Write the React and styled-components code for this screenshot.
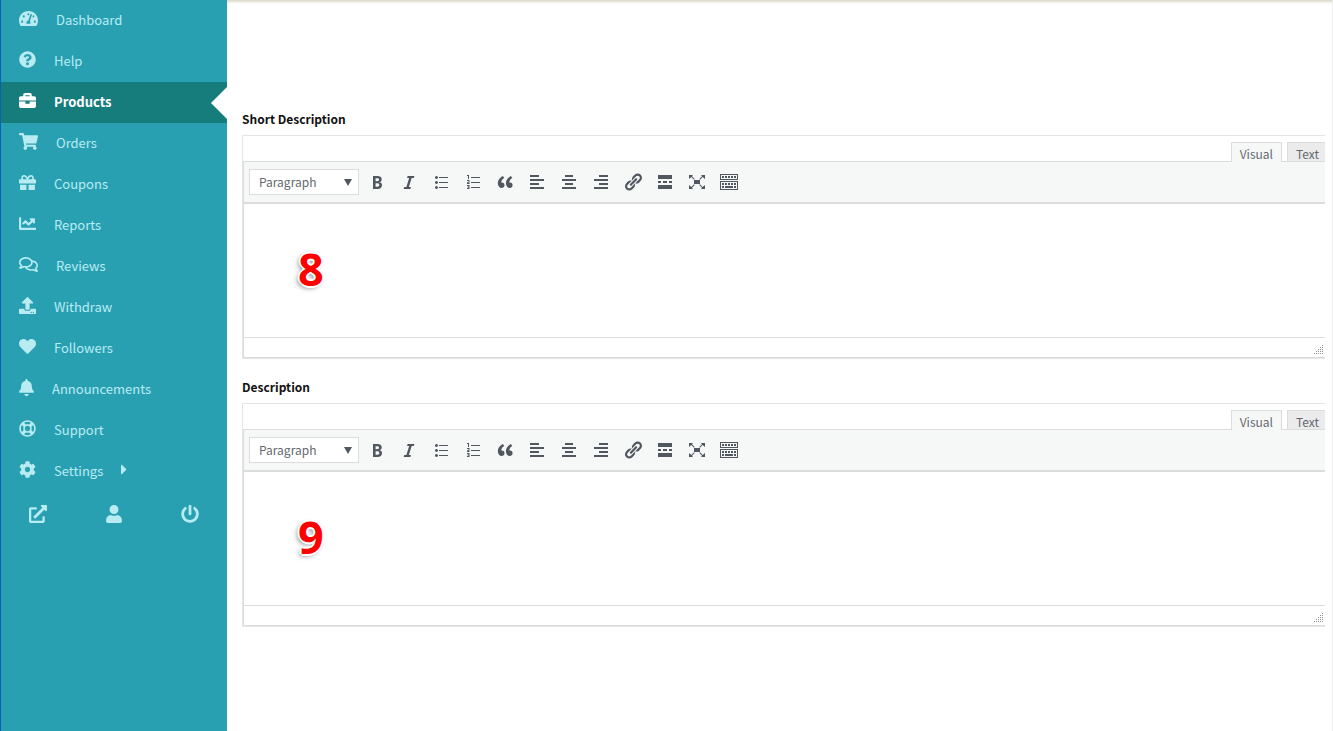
import React from 'react';
import styled, { createGlobalStyle } from 'styled-components';
import {
    FaTachometerAlt, FaQuestionCircle, FaBriefcase, FaShoppingCart, FaGift, FaChartLine,
    FaRegComments, FaUpload, FaHeart, FaBell, FaRegLifeRing, FaCog, FaCaretRight,
    FaExternalLinkAlt, FaUser, FaPowerOff
} from 'react-icons/fa';

const GlobalStyle = createGlobalStyle`
    * {
        box-sizing: border-box;
    }
    body {
        margin: 0;
        background: #fff;
        font-family: "Noto Sans CJK SC", "Open Sans", sans-serif;
        font-size: 13px;
        color: #111;
    }
`
const Page = styled.div`
    display: flex;
    min-height: 100vh;
    border-left: 1px solid #0a62b4;
    border-right: 1px solid #eee;
`
const Sidebar = styled.nav`
    width: 226px;
    flex: none;
    background: #29a0b2;
`
const Menu = styled.ul`
    list-style: none;
    margin: 0;
    padding: 0;
`
const MenuLink = styled.a`
    display: flex;
    align-items: center;
    justify-content: space-between;
    height: 41px;
    padding-left: 18px;
    color: ${props => props.$active ? '#fff' : '#b8ecf2'};
    background: ${props => props.$active ? '#177c7c' : 'transparent'};
    font-weight: ${props => props.$active ? 700 : 400};
    text-decoration: none;
`
const MenuLabel = styled.span`
    display: flex;
    align-items: center;
    gap: 18px;
    padding-bottom: 2px;
`
const MenuIcon = styled.span`
    display: flex;
    width: ${props => props.$width || 17}px;
    padding-bottom: 3px;
    svg {
        width: 100%;
        height: 17px;
    }
`
const Pointer = styled.span`
    border: 16px solid transparent;
    border-right-color: #fff;
    border-left: 0;
`
const QuickLinks = styled.div`
    display: flex;
    justify-content: space-between;
    padding: 13px 28px;
`
const QuickLink = styled.a`
    display: flex;
    color: #b8ecf2;
    svg {
        width: 18px;
        height: 18px;
    }
`
const Main = styled.main`
    flex: 1;
    min-width: 0;
    padding: 109px 7px 0 15px;
    background: linear-gradient(#dbd7c6, #fff) top / 100% 4px no-repeat;
`
const Field = styled.section`
    margin-bottom: 18px;
`
const Label = styled.label`
    display: block;
    height: 20px;
    line-height: 20px;
    margin-bottom: 6px;
    font-size: 12px;
    font-weight: 700;
`
const Editor = styled.div`
    border: 1px solid #e5e5e5;
    border-right: 0;
    overflow: hidden;
`
const Tabs = styled.div`
    display: flex;
    justify-content: flex-end;
    gap: 5px;
    height: 25px;
    padding-top: 6px;
`
const Tab = styled.button`
    height: ${props => props.$active ? 20 : 19}px;
    padding: ${props => props.$active ? '1px 8px 0' : '1px 6px 0 8px'};
    position: relative;
    border: 1px solid #dcdcde;
    border-bottom: 0;
    border-right-width: ${props => props.$active ? 1 : 0}px;
    background: ${props => props.$active ? '#f6f7f7' : '#ebebeb'};
    color: #646970;
    font: 12px/20px "Noto Sans CJK SC", sans-serif;
`
const Frame = styled.div`
    border-left: 1px solid #dcdcde;
    border-bottom: 1px solid #dcdcde;
`
const Toolbar = styled.div`
    display: flex;
    align-items: center;
    height: 43px;
    padding-left: 5px;
    background: #f6f7f7;
    border-top: 1px solid #dcdcde;
    border-bottom: 2px solid #dcdcde;
`
const FormatBox = styled.span`
    display: flex;
    align-items: center;
    width: 110px;
    height: 26px;
    margin-right: 2px;
    padding-right: 6px;
    background: #fff;
    border: 1px solid #dcdcde;
    svg {
        flex: none;
    }
`
const FormatSelect = styled.select`
    appearance: none;
    flex: 1;
    min-width: 0;
    padding: 0 0 0 9px;
    border: 0;
    background: transparent;
    color: #646970;
    font: 12px/20px "Noto Sans CJK SC", sans-serif;
`
const ToolButton = styled.button`
    display: flex;
    align-items: center;
    justify-content: center;
    width: 32px;
    height: 28px;
    padding: 0;
    border: 0;
    background: transparent;
    color: #50575e;
    svg {
        fill: currentColor;
    }
`
const TextArea = styled.textarea`
    display: block;
    width: 100%;
    height: 133px;
    padding: 37px 54px;
    border: 0;
    outline: 0;
    resize: none;
    background: transparent;
    color: #f00;
    font: 700 45px/56px "Open Sans", sans-serif;
    text-shadow: 2px 0 #fff, -2px 0 #fff, 0 2px #fff, 0 -2px #fff, -2px 2px 5px #888;
`
const StatusBar = styled.div`
    display: flex;
    justify-content: flex-end;
    align-items: flex-end;
    height: 20px;
    padding: 0 2px 3px 0;
    border-top: 1px solid #dcdcde;
`

const menu = [
    { text: 'Dashboard', Icon: FaTachometerAlt, width: 19 },
    { text: 'Help', Icon: FaQuestionCircle },
    { text: 'Products', Icon: FaBriefcase, active: true },
    { text: 'Orders', Icon: FaShoppingCart, width: 19 },
    { text: 'Coupons', Icon: FaGift },
    { text: 'Reports', Icon: FaChartLine },
    { text: 'Reviews', Icon: FaRegComments, width: 19 },
    { text: 'Withdraw', Icon: FaUpload },
    { text: 'Followers', Icon: FaHeart },
    { text: 'Announcements', Icon: FaBell, width: 15 },
    { text: 'Support', Icon: FaRegLifeRing },
    { text: 'Settings', Icon: FaCog, more: true }
]

// 20x20 grid
const tools = [
    { name: 'Bold', d: 'M6 4v13h4.54c1.37 0 2.46-.33 3.26-1 .8-.66 1.2-1.58 1.2-2.77 0-.84-.17-1.51-.51-2.01s-.9-.85-1.67-1.03v-.09c.57-.1 1.02-.4 1.36-.9s.51-1.13.51-1.91c0-1.14-.39-1.98-1.17-2.5C12.75 4.26 11.5 4 9.78 4H6zm2.57 5.15V6.26h1.36c.73 0 1.27.11 1.61.32.34.22.51.58.51 1.07 0 .54-.16.92-.47 1.15s-.82.35-1.51.35h-1.5zm0 2.19h1.6c1.44 0 2.16.53 2.16 1.61 0 .6-.17 1.05-.51 1.34s-.86.43-1.57.43H8.57v-3.38z' },
    { name: 'Italic', d: 'M14.78 6h-2.13l-2.8 9h2.12l-.62 2H4.6l.62-2h2.14l2.8-9H8.03l.62-2h6.75z' },
    { name: 'Bulleted list', d: 'M5.500 4a1.500 1.500 0 1 1-.01 0zM5.500 9a1.500 1.500 0 1 1-.01 0zM5.500 14a1.500 1.500 0 1 1-.01 0zM8 5h9v1H8zM8 10h9v1H8zM8 15h9v1H8z' },
    { name: 'Numbered list', d: 'M4 3h2v4H5V4H4zM4 8h2.500v2.500L5.500 11h1v1H4v-1.500l1.500-.5V9H4zM4 13h2.500v4H4v-1h1.500v-.5h-1v-1h1V14H4zM8 5h9v1H8zM8 10h9v1H8zM8 15h9v1H8z' },
    { name: 'Blockquote', d: 'M9.49 13.22c0-.74-.2-1.38-.61-1.9-.62-.78-1.83-.88-2.53-.72-.29-1.65 1.11-3.75 2.92-4.65L7.88 4c-2.73 1.3-5.42 4.28-4.96 8.05C3.21 14.43 4.59 16 6.54 16c.85 0 1.56-.25 2.12-.75s.83-1.18.83-2.03zm8.05 0c0-.74-.2-1.38-.61-1.9-.63-.78-1.83-.88-2.53-.72-.29-1.65 1.11-3.75 2.92-4.65L15.93 4c-2.73 1.3-5.41 4.28-4.95 8.05.29 2.38 1.66 3.95 3.61 3.95.85 0 1.56-.25 2.12-.75s.83-1.18.83-2.03z' },
    { name: 'Align left', d: 'M3 3h9v2H3zM3 7h14v2H3zM3 11h9v2H3zM3 15h14v2H3z' },
    { name: 'Align center', d: 'M6 3h8v2H6zM3 7h14v2H3zM6 11h8v2H6zM3 15h14v2H3z' },
    { name: 'Align right', d: 'M8 3h9v2H8zM3 7h14v2H3zM8 11h9v2H8zM3 15h14v2H3z' },
    { name: 'Insert link', d: 'M17.74 2.76c1.68 1.69 1.68 4.41 0 6.1l-1.53 1.52c-1.12 1.12-2.7 1.47-4.14 1.09l2.62-2.61.76-.77.76-.76c.84-.84.84-2.2 0-3.04-.84-.85-2.2-.85-3.04 0l-.77.76-3.38 3.38c-.37-1.44-.02-3.02 1.1-4.14l1.52-1.53c1.69-1.68 4.42-1.68 6.1 0zM8.59 13.43l5.34-5.34c.42-.42.42-1.1 0-1.52-.44-.43-1.13-.39-1.53 0l-5.33 5.34c-.42.42-.42 1.1 0 1.52.44.43 1.13.39 1.52 0zm-.76 2.29l4.14-4.15c.38 1.44.03 3.02-1.09 4.14l-1.52 1.53c-1.69 1.68-4.41 1.68-6.1 0-1.68-1.68-1.68-4.42 0-6.1l1.53-1.52c1.12-1.12 2.7-1.47 4.14-1.1l-4.14 4.15c-.85.84-.85 2.2 0 3.05.84.84 2.2.84 3.04 0z' },
    { name: 'Read more', d: 'M3 3h14v4H3zM3 9h3v2H3zM8 9h4v2H8zM14 9h3v2h-3zM3 13h14v4H3z' },
    { name: 'Fullscreen', d: 'M7 8h6v4H7zM2 3h4L5 4.300 7.700 7 7 7.700 4.300 5 2 7zM18 3h-4l1 1.300L12.300 7l.7.700L15.700 5 18 7zM2 17h4l-1-1.300L7.700 13l-.7-.700L4.300 15 2 13zM18 17h-4l1-1.300L12.300 13l.7-.700 2.700 2.700L18 13z' },
    { name: 'Toolbar toggle', d: 'M1 2h18v6H1zM2 3v4h16V3zM1 9h18v9H1zM2 10v7h16v-7zM3 4h2v2H3zM6 4h2v2H6zM9 4h2v2H9zM12 4h2v2h-2zM15 4h2v2h-2zM3 11h2v2H3zM6 11h2v2H6zM9 11h2v2H9zM12 11h2v2h-2zM15 11h2v2h-2zM3 14h2v2H3zM6 14h8v2H6zM15 14h2v2h-2z' }
]

function RichText({ id, label, value }) {
    return (
        <Field>
            <Label htmlFor={id}>{label}</Label>
            <Editor>
                <Tabs>
                    <Tab type="button" $active>Visual</Tab>
                    <Tab type="button">Text</Tab>
                </Tabs>
                <Frame>
                    <Toolbar>
                        <FormatBox>
                            <FormatSelect aria-label="Format">
                                <option>Paragraph</option>
                            </FormatSelect>
                            <svg width="8" height="7" fill="#50575e"><path d="M0 0h8L4 7z" /></svg>
                        </FormatBox>
                        {tools.map(tool => (
                            <ToolButton key={tool.name} type="button" aria-label={tool.name}>
                                <svg width="20" height="20" viewBox="0 0 20 20">
                                    <path d={tool.d} fillRule="evenodd" />
                                </svg>
                            </ToolButton>
                        ))}
                    </Toolbar>
                    <TextArea id={id} defaultValue={value} spellCheck="false" />
                    <StatusBar>
                        <svg width="9" height="9" fill="#8c8f94">
                            <path d="M8 0h1v1H8zM6 2h1v1H6zM8 2h1v1H8zM4 4h1v1H4zM6 4h1v1H6zM8 4h1v1H8zM2 6h1v1H2zM4 6h1v1H4zM6 6h1v1H6zM8 6h1v1H8zM0 8h1v1H0zM2 8h1v1H2zM4 8h1v1H4zM6 8h1v1H6zM8 8h1v1H8z" />
                        </svg>
                    </StatusBar>
                </Frame>
            </Editor>
        </Field>
    )
}

function App() {
    return (
        <Page>
            <GlobalStyle />
            <Sidebar>
                <Menu>
                    {menu.map(({ text, Icon, width, active, more }) => (
                        <li key={text}>
                            <MenuLink href="#" $active={active}>
                                <MenuLabel>
                                    <MenuIcon $width={width}><Icon /></MenuIcon>
                                    {text}
                                    {more && <MenuIcon $width={6}><FaCaretRight /></MenuIcon>}
                                </MenuLabel>
                                {active && <Pointer />}
                            </MenuLink>
                        </li>
                    ))}
                </Menu>
                <QuickLinks>
                    <QuickLink href="#" aria-label="Visit store"><FaExternalLinkAlt /></QuickLink>
                    <QuickLink href="#" aria-label="Edit account"><FaUser /></QuickLink>
                    <QuickLink href="#" aria-label="Log out"><FaPowerOff /></QuickLink>
                </QuickLinks>
            </Sidebar>
            <Main>
                <RichText id="short-description" label="Short Description" value="8" />
                <RichText id="description" label="Description" value="9" />
            </Main>
        </Page>
    );
}

export default App;
